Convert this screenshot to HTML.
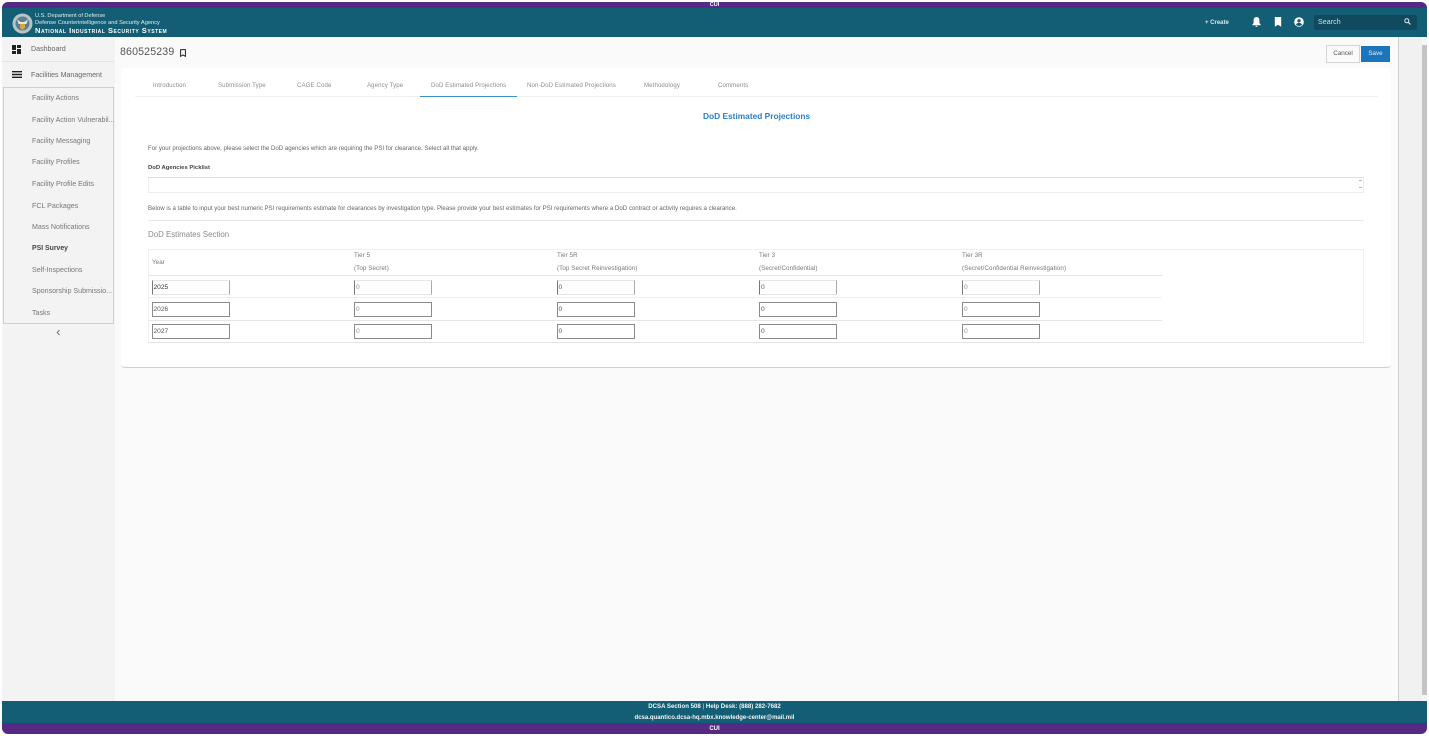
<!DOCTYPE html>
<html><head><meta charset="utf-8"><style>
*{box-sizing:border-box}
html,body{margin:0;padding:0;width:1429px;height:736px;overflow:hidden;background:#fff;font-family:"Liberation Sans",sans-serif}
#f{position:absolute;left:2px;top:2px;width:1425px;height:732px;border-radius:6px;overflow:hidden;background:#fafafa}
.a{position:absolute;white-space:nowrap}
.t{position:absolute;white-space:nowrap;line-height:12px}
.box{position:absolute;width:78px;height:15px;border:1px solid #8a8a8a;font-size:6.6px;line-height:13px;padding-left:1px;color:#555;background:#fff}
.box.first{border-color:#e6e6e6 #aaa #e4e4e4 #777}
.nav{position:absolute;left:32px;font-size:7.1px;color:#777;line-height:12px;white-space:nowrap}
.tab{position:absolute;top:80px;font-size:6.1px;color:#8d8d8d;line-height:12px;white-space:nowrap;letter-spacing:.1px}
.th{position:absolute;font-size:6.2px;color:#777;line-height:10px;white-space:nowrap;letter-spacing:.1px}
.hl{position:absolute;height:1px;background:#e6e6e6}
</style></head><body>
<div id="f"></div>
<div class="a" style="left:2px;top:2px;width:1425px;height:6px;background:#542a85;border-radius:6px 6px 0 0"></div>
<div class="t" style="left:0;width:1429px;text-align:center;top:0;height:8px;overflow:hidden;font-size:5.5px;line-height:10px;font-weight:bold;color:#fff">CUI</div>
<div class="a" style="left:2px;top:8px;width:1425px;height:29px;background:#135d75"></div>

<svg class="a" style="left:12px;top:13px" width="21" height="21" viewBox="0 0 21 21"><circle cx="10.5" cy="10.5" r="10" fill="#b9c4c4"/><circle cx="10.5" cy="10.5" r="7" fill="#5b7f95"/><path d="M5 6c2 2 3 3 5.500 3S14 8 16 6l-1.500 5H6.500z" fill="#e8e6d8"/><path d="M8 11h5v4l-2.500 2L8 15z" fill="#d4a93a"/></svg>
<div class="t" style="left:35px;top:10px;font-size:5.6px;color:#e4edf0">U.S. Department of Defense</div>
<div class="t" style="left:35px;top:17px;font-size:5.7px;color:#e4edf0">Defense Counterintelligence and Security Agency</div>
<div class="t" style="left:35px;top:25px;font-weight:bold;color:#fff;font-variant:small-caps;letter-spacing:.53px;font-size:7.5px">National Industrial Security System</div>

<div class="t" style="left:1205px;top:17px;font-size:6px;font-weight:bold;color:#dce8ec">+ Create</div>
<svg class="a" style="left:1252px;top:17px" width="9" height="10" viewBox="0 0 9 10"><path d="M4.500 0C2.700 0 1.600 1.400 1.600 3.200V6L.3 7.700V8.300H8.700V7.700L7.400 6V3.200C7.400 1.400 6.300 0 4.500 0zM3.400 8.800h2.200A1.100 1.100 0 0 1 3.400 8.800z" fill="#fff"/></svg>
<svg class="a" style="left:1274px;top:17px" width="8" height="10" viewBox="0 0 8 10"><path d="M.8 0H7.200V9.800L4 7.800.8 9.800z" fill="#fff"/></svg>
<svg class="a" style="left:1294px;top:17px" width="10" height="10" viewBox="0 0 10 10"><circle cx="5" cy="5" r="4.800" fill="#fff"/><circle cx="5" cy="3.800" r="1.700" fill="#135d75"/><path d="M1.900 7.600C2.600 6.300 3.800 5.900 5 5.900S7.400 6.300 8.100 7.600C7.300 8.500 6.200 9 5 9S2.700 8.500 1.900 7.600z" fill="#135d75"/></svg>
<div class="a" style="left:1314px;top:15px;width:103px;height:15px;background:#104a5f;border-radius:2px"></div>
<div class="t" style="left:1318px;top:17px;font-size:7px;color:#d5e2e6;letter-spacing:.1px">Search</div>
<svg class="a" style="left:1404px;top:18px" width="7" height="7" viewBox="0 0 7 7"><circle cx="2.800" cy="2.800" r="2" fill="none" stroke="#dce8ec" stroke-width="1"/><path d="M4.300 4.300L6.500 6.500" stroke="#dce8ec" stroke-width="1.100"/></svg>

<div class="a" style="left:2px;top:37px;width:113px;height:664px;background:#f3f3f3"></div>
<svg class="a" style="left:12px;top:45px" width="9" height="9" viewBox="0 0 9 9"><path d="M0 0H4V5H0zM5 0H9V3H5zM0 6H4V9H0zM5 4H9V9H5z" fill="#222"/></svg>
<div class="nav" style="left:31px;top:43px;color:#666">Dashboard</div>
<div class="hl" style="left:2px;top:61px;width:112px;background:#e3e3e3"></div>
<svg class="a" style="left:12px;top:71px" width="10" height="7" viewBox="0 0 10 7"><path d="M0 0H10V1.400H0zM0 2.800H10V4.200H0zM0 5.600H10V7H0z" fill="#222"/></svg>
<div class="nav" style="left:31px;top:69px;color:#666">Facilities Management</div>
<div class="a" style="left:3px;top:87px;width:111px;height:237px;border:1px solid #cfcfcf"></div>
<div class="nav" style="top:92px">Facility Actions</div>
<div class="nav" style="top:114px">Facility Action Vulnerabil...</div>
<div class="nav" style="top:135px">Facility Messaging</div>
<div class="nav" style="top:156px">Facility Profiles</div>
<div class="nav" style="top:178px">Facility Profile Edits</div>
<div class="nav" style="top:200px">FCL Packages</div>
<div class="nav" style="top:221px">Mass Notifications</div>
<div class="nav" style="top:243px;color:#444;font-weight:bold;font-size:6.900px">PSI Survey</div>
<div class="nav" style="top:264px">Self-Inspections</div>
<div class="nav" style="top:285px">Sponsorship Submissio...</div>
<div class="nav" style="top:307px">Tasks</div>
<svg class="a" style="left:56px;top:329px" width="5" height="7" viewBox="0 0 5 7"><path d="M3.500 1L1.200 3.500 3.500 6" fill="none" stroke="#777" stroke-width="1"/></svg>

<div class="t" style="left:120px;top:46px;font-size:10.600px;color:#555;letter-spacing:.15px">860525239</div>
<svg class="a" style="left:180px;top:49px" width="6" height="8" viewBox="0 0 6 8"><path d="M.6.600H5.400V7.300L3 5.900.6 7.300z" fill="none" stroke="#222" stroke-width="1"/></svg>
<div class="a" style="left:1326px;top:45px;width:34px;height:18px;border:1px solid #d6d6d6;background:#fafafa;font-size:6.3px;line-height:16px;text-align:center;color:#555">Cancel</div>
<div class="a" style="left:1361px;top:46px;width:29px;height:16px;background:#1a75bc;font-size:6.3px;line-height:16px;text-align:center;color:#e4f0f8">Save</div>

<div class="a" style="left:121px;top:68px;width:1270px;height:300px;background:#fff;border-radius:4px;border-bottom:1px solid #cfcfcf"></div>
<div class="tab" style="left:153px">Introduction</div>
<div class="tab" style="left:218px">Submission Type</div>
<div class="tab" style="left:297px">CAGE Code</div>
<div class="tab" style="left:367px">Agency Type</div>
<div class="tab" style="left:431px">DoD Estimated Projections</div>
<div class="tab" style="left:527px">Non-DoD Estimated Projections</div>
<div class="tab" style="left:644px">Methodology</div>
<div class="tab" style="left:718px">Comments</div>
<div class="hl" style="left:135px;top:96px;width:1243px;background:#f0f0f0"></div>
<div class="a" style="left:420px;top:96px;width:97px;height:1px;background:#3f90cc"></div>

<div class="t" style="left:703px;top:110px;font-size:8.350px;font-weight:bold;color:#2a80c4">DoD Estimated Projections</div>
<div class="t" style="left:148px;top:143px;font-size:6.100px;color:#666">For your projections above, please select the DoD agencies which are requiring the PSI for clearance. Select all that apply.</div>
<div class="t" style="left:148px;top:162px;font-size:5.900px;font-weight:bold;color:#444">DoD Agencies Picklist</div>
<div class="a" style="left:148px;top:177px;width:1216px;height:16px;border:1px solid #eeeeee;border-top-color:#dedede;background:#fff"></div>
<div class="a" style="left:1359px;top:180px;width:3px;height:1px;background:#bbb"></div>
<div class="a" style="left:1359px;top:187px;width:3px;height:1px;background:#bbb"></div>
<div class="t" style="left:148px;top:203px;font-size:6.100px;color:#666;letter-spacing:.007px">Below is a table to input your best numeric PSI requirements estimate for clearances by investigation type. Please provide your best estimates for PSI requirements where a DoD contract or activity requires a clearance.</div>
<div class="hl" style="left:148px;top:220px;width:1216px"></div>
<div class="t" style="left:148px;top:229px;font-size:7.900px;color:#8a8a8a">DoD Estimates Section</div>

<div class="a" style="left:148px;top:249px;width:1216px;height:94px;border:1px solid #f1f1f1;border-bottom:1px solid #e4e4e4"></div>
<div class="hl" style="left:149px;top:275px;width:1013px;background:#e2e2e2"></div>
<div class="hl" style="left:149px;top:297px;width:1013px;background:#efefef"></div>
<div class="hl" style="left:149px;top:320px;width:1013px;background:#e6e6e6"></div>

<div class="th" style="left:152px;top:258px">Year</div>
<div class="th" style="left:354px;top:251px">Tier 5</div><div class="th" style="left:354px;top:264px">(Top Secret)</div>
<div class="th" style="left:557px;top:251px">Tier 5R</div><div class="th" style="left:557px;top:264px">(Top Secret Reinvestigation)</div>
<div class="th" style="left:759px;top:251px">Tier 3</div><div class="th" style="left:759px;top:264px">(Secret/Confidential)</div>
<div class="th" style="left:962px;top:251px">Tier 3R</div><div class="th" style="left:962px;top:264px">(Secret/Confidential Reinvestigation)</div>

<div class="box first" style="left:151.500px;top:280px;color:#333">2025</div>
<div class="box first" style="left:354px;top:280px;color:#888">0</div>
<div class="box first" style="left:556.500px;top:280px">0</div>
<div class="box first" style="left:759px;top:280px">0</div>
<div class="box first" style="left:962px;top:280px;color:#888">0</div>
<div class="box" style="left:151.500px;top:302px">2026</div>
<div class="box" style="left:354px;top:302px;color:#999">0</div>
<div class="box" style="left:556.500px;top:302px">0</div>
<div class="box" style="left:759px;top:302px">0</div>
<div class="box" style="left:962px;top:302px;color:#999">0</div>
<div class="box" style="left:151.500px;top:324px">2027</div>
<div class="box" style="left:354px;top:324px;color:#999">0</div>
<div class="box" style="left:556.500px;top:324px">0</div>
<div class="box" style="left:759px;top:324px">0</div>
<div class="box" style="left:962px;top:324px;color:#999">0</div>

<div class="a" style="left:1398px;top:37px;width:29px;height:664px;background:#f1f1f1;border-left:1px solid #cfcfcf"></div>
<div class="a" style="left:1422px;top:37px;width:5px;height:664px;background:#f6f6f6"></div>
<div class="a" style="left:1422px;top:45px;width:5px;height:650px;background:#c4c4c4"></div>

<div class="a" style="left:2px;top:701px;width:1425px;height:22px;background:#135d75"></div>
<div class="t" style="left:0;width:1429px;text-align:center;top:701px;font-size:6.100px;font-weight:bold;color:#f2f6f7">DCSA Section 508 <span style="color:#d8b25a">|</span> Help Desk: (888) 282-7682</div>
<div class="t" style="left:0;width:1429px;text-align:center;top:712px;font-size:6px;font-weight:bold;color:#f2f6f7">dcsa.quantico.dcsa-hq.mbx.knowledge-center@mail.mil</div>
<div class="a" style="left:2px;top:723px;width:1425px;height:11px;background:#542a85;border-radius:0 0 6px 6px"></div>
<div class="t" style="left:0;width:1429px;text-align:center;top:723px;font-size:6px;font-weight:bold;color:#fff">CUI</div>
</body></html>
